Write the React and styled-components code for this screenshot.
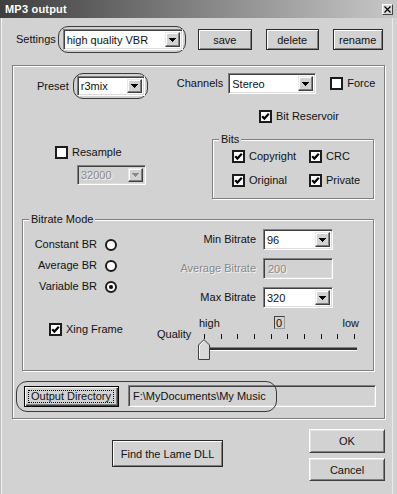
import React from 'react'
import styled, { createGlobalStyle } from 'styled-components'

const FACE = '#d2d2d2'

const GlobalStyle = createGlobalStyle`
  html, body {
    margin: 0;
    padding: 0;
    background: ${FACE};
  }
  body {
    font-family: "Liberation Sans", Arial, sans-serif;
    font-size: 11px;
    color: #111;
  }
`

const Window = styled.div`
  width: 397px;
  height: 494px;
  box-sizing: border-box;
  overflow: hidden;
  display: flex;
  flex-direction: column;
  background: ${FACE};
  box-shadow: inset 1px 0 #bdbdbd, inset 2px 0 #f2f2f2, inset -4px 0 ${FACE}, inset -5px 0 #ececec;
`

const TitleBar = styled.div`
  height: 18px;
  flex: none;
  display: flex;
  align-items: center;
  justify-content: space-between;
  padding: 0 4px 0 5px;
  background: linear-gradient(to right, #3e3e3e, #8a8a8a 55%, #c8c8c8);
`

const TitleText = styled.span`
  color: #fff;
  font-weight: bold;
  font-size: 11px;
  letter-spacing: 0.2px;
`

const CloseBox = styled.span`
  width: 11px;
  height: 11px;
  box-sizing: border-box;
  display: flex;
  align-items: center;
  justify-content: center;
  background: #dadada;
  border: 1px solid;
  border-color: #fff #404040 #404040 #fff;
`

const SettingsRow = styled.div`
  display: flex;
  align-items: center;
  margin-top: 8px;
  padding-left: 16px;
`

const Label = styled.span`
  white-space: nowrap;
  line-height: 13px;
  margin-left: ${p => p.$ml || 0}px;
  color: ${p => (p.$disabled ? '#888' : '#111')};
  text-shadow: ${p => (p.$disabled ? '1px 1px #f4f4f4' : 'none')};
`

const Highlight = styled.div`
  display: flex;
  border: 1px solid #3a3a3a;
  border-radius: 10px;
  padding: ${p => p.$pad};
  margin-left: ${p => p.$ml || 0}px;
`

const Combo = styled.div`
  box-sizing: border-box;
  width: ${p => p.$w}px;
  height: ${p => p.$h}px;
  display: flex;
  padding: 2px;
  background: ${p => (p.$disabled ? FACE : '#fff')};
  border: 1px solid;
  border-color: #808080 #fff #fff #808080;
  box-shadow: inset 1px 1px #404040, inset -1px -1px #dcdcdc;
  margin-left: ${p => p.$ml || 0}px;
`

const ComboValue = styled.span`
  flex: 1;
  display: flex;
  align-items: center;
  padding-left: 1px;
  white-space: nowrap;
  overflow: hidden;
  color: ${p => (p.$disabled ? '#8a8a8a' : '#111')};
  text-shadow: ${p => (p.$disabled ? '1px 1px #f4f4f4' : 'none')};
`

const DropButton = styled.span`
  width: 15px;
  box-sizing: border-box;
  display: flex;
  align-items: center;
  justify-content: center;
  background: ${FACE};
  border: 1px solid;
  border-color: #e8e8e8 #404040 #404040 #e8e8e8;
  box-shadow: inset -1px -1px #808080, inset 1px 1px #fff;
`

const Button = styled.button`
  box-sizing: border-box;
  width: ${p => p.$w}px;
  height: ${p => p.$h || 21}px;
  margin: 0 0 0 ${p => p.$ml || 0}px;
  padding: 0;
  font: 11px "Liberation Sans", Arial, sans-serif;
  color: #111;
  background: ${FACE};
  border: 1px solid;
  border-color: ${p => (p.$framed ? '#2a2a2a' : '#fff #404040 #404040 #fff')};
  box-shadow: ${p =>
    p.$framed
      ? 'inset 1px 1px #fff, inset -1px -1px #808080'
      : 'inset 1px 1px #e4e4e4, inset -1px -1px #808080'};
`

const FocusButton = styled(Button)`
  border: 1px solid #000;
  box-shadow: inset 1px 1px #fff, inset -1px -1px #404040, inset -2px -2px #808080;
  padding: 3px 4px 3px 3px;
`

const FocusRect = styled.span`
  box-sizing: border-box;
  width: 100%;
  height: 100%;
  display: flex;
  align-items: center;
  justify-content: center;
  border: 1px dotted #000;
`

const Panel = styled.div`
  box-sizing: border-box;
  width: 373px;
  height: 354px;
  margin: 12px 0 0 12px;
  display: flex;
  flex-direction: column;
  border: 1px solid #808080;
  box-shadow: inset 1px 1px #fff, 1px 1px #fff;
`

const Row = styled.div`
  display: flex;
  align-items: ${p => p.$align || 'center'};
  margin-top: ${p => p.$mt || 0}px;
  padding-left: ${p => p.$pl || 0}px;
`

const Group = styled.div`
  box-sizing: border-box;
  width: ${p => p.$w}px;
  height: ${p => p.$h}px;
  margin: ${p => p.$m || 0};
  display: flex;
  flex-direction: column;
  border: 1px solid #808080;
  box-shadow: inset 1px 1px #fff, 1px 1px #fff;
`

const GroupTitle = styled.span`
  align-self: flex-start;
  height: 13px;
  line-height: 13px;
  margin: -7px 0 -6px 6px;
  padding: 0 2px;
  background: ${FACE};
`

const CheckWrap = styled.span`
  display: inline-flex;
  align-items: center;
  gap: 4px;
  line-height: 13px;
  white-space: nowrap;
  margin: ${p => p.$m || 0};
`

const Box = styled.span`
  box-sizing: border-box;
  width: 13px;
  height: 13px;
  flex: none;
  display: flex;
  align-items: center;
  justify-content: center;
  background: #fff;
  border: 2px solid #1c1c1c;
`

const LeftColumn = styled.div`
  width: 199px;
  box-sizing: border-box;
  padding-left: 42px;
  display: flex;
  flex-direction: column;
  align-items: flex-start;
`

const BitsGrid = styled.div`
  display: grid;
  grid-template-columns: 77px auto;
  row-gap: 11px;
  padding: 10px 0 0 19px;
`

const RadioColumn = styled.div`
  width: 95px;
  padding-top: 14px;
  display: flex;
  flex-direction: column;
`

const RadioRow = styled.div`
  height: 21px;
  display: flex;
  align-items: center;
  justify-content: flex-end;
  gap: 8px;
  padding-right: 1px;
`

const RadioCircle = styled.span`
  box-sizing: border-box;
  width: 12px;
  height: 12px;
  border-radius: 50%;
  border: 2px solid #1c1c1c;
  background: #fff;
  display: flex;
  align-items: center;
  justify-content: center;
`

const RadioDot = styled.span`
  width: 4px;
  height: 4px;
  border-radius: 50%;
  background: #000;
`

const FieldsGrid = styled.div`
  display: grid;
  grid-template-columns: 100px 70px;
  grid-auto-rows: 21px;
  column-gap: 7px;
  row-gap: 8px;
  margin-left: 38px;
  padding-top: 9px;
  align-items: center;
  justify-items: end;
`

const Edit = styled.div`
  box-sizing: border-box;
  width: ${p => p.$w}px;
  height: ${p => p.$h}px;
  margin-left: ${p => p.$ml || 0}px;
  display: flex;
  align-items: center;
  padding-left: 4px;
  white-space: nowrap;
  background: ${FACE};
  border: 1px solid;
  border-color: #808080 #fff #fff #808080;
  box-shadow: inset 1px 1px #404040, inset -1px -1px #dcdcdc;
  color: ${p => (p.$disabled ? '#8a8a8a' : '#111')};
  text-shadow: ${p => (p.$disabled ? '1px 1px #f4f4f4' : 'none')};
`

const XingBlock = styled.div`
  width: 134px;
  box-sizing: border-box;
  padding: 7px 0 0 26px;
`

const QualityLabel = styled.span`
  width: 41px;
  margin-top: 12px;
  line-height: 13px;
`

const SliderBox = styled.div`
  width: 163px;
  display: flex;
  flex-direction: column;
`

const SliderLabels = styled.div`
  height: 13px;
  display: flex;
  justify-content: space-between;
  align-items: center;
  padding: 0 2px 0 1px;
  line-height: 12px;
`

const ValueBox = styled.span`
  box-sizing: border-box;
  width: 11px;
  height: 13px;
  display: flex;
  align-items: center;
  justify-content: center;
  border: 1px solid;
  border-color: #404040 #9a9a9a #9a9a9a #404040;
  margin-right: 4px;
`

const OutputRow = styled.div`
  position: relative;
  display: flex;
  align-items: center;
  margin-top: 14px;
  padding-left: 11px;
`

const OutputHighlight = styled.span`
  position: absolute;
  left: 3px;
  top: -4px;
  width: 261px;
  height: 31px;
  box-sizing: border-box;
  border: 1px solid #3a3a3a;
  border-radius: 11px;
  pointer-events: none;
`

const BottomRow = styled.div`
  display: flex;
  align-items: flex-start;
  padding-left: 112px;
`

const ButtonStack = styled.div`
  margin: 10px 12px 0 auto;
  display: flex;
  flex-direction: column;
  gap: 5px;
`

function Arrow({ disabled }) {
  const c = disabled ? '#8a8a8a' : '#000'
  return (
    <svg width="7" height="4" viewBox="0 0 7 4" shapeRendering="crispEdges">
      <path d="M0 0h7v1H0z M1 1h5v1H1z M2 2h3v1H2z M3 3h1v1H3z" fill={c} />
    </svg>
  )
}

function ComboBox({ value, width, height = 21, disabled, ml }) {
  return (
    <Combo $w={width} $h={height} $disabled={disabled} $ml={ml}>
      <ComboValue $disabled={disabled}>{value}</ComboValue>
      <DropButton>
        <Arrow disabled={disabled} />
      </DropButton>
    </Combo>
  )
}

function CheckBox({ checked, children, m }) {
  return (
    <CheckWrap $m={m}>
      <Box>
        {checked && (
          <svg width="9" height="9" viewBox="0 0 9 9">
            <path d="M1.2 4.2 L3.4 6.6 L7.8 1.8" fill="none" stroke="#000" strokeWidth="2.2" />
          </svg>
        )}
      </Box>
      {children && <span>{children}</span>}
    </CheckWrap>
  )
}

function Radio({ label, checked }) {
  return (
    <RadioRow>
      <Label>{label}</Label>
      <RadioCircle>{checked && <RadioDot />}</RadioCircle>
    </RadioRow>
  )
}

function QualitySlider() {
  const ticks = Array.from({ length: 10 }, (_, i) => 6.5 + Math.round(i * 16.67))
  return (
    <SliderBox>
      <SliderLabels>
        <span>high</span>
        <ValueBox>0</ValueBox>
        <span>low</span>
      </SliderLabels>
      <svg width="163" height="31" viewBox="0 0 163 31">
        {ticks.map(x => (
          <line key={x} x1={x} x2={x} y1={5} y2={10} stroke="#111" strokeWidth="1" />
        ))}
        <rect x="6" y="18" width="153" height="1" fill="#808080" />
        <rect x="6" y="19" width="153" height="2" fill="#303030" />
        <rect x="6" y="21" width="153" height="1" fill="#fff" />
        <polygon points="0.5,30.5 0.5,16 6,10.5 11.5,16 11.5,30.5" fill="#d8d8d8" stroke="#404040" />
        <polyline points="1.5,29.5 1.5,16.5 6,12" fill="none" stroke="#fff" />
      </svg>
    </SliderBox>
  )
}

export default function App() {
  return (
    <Window>
      <GlobalStyle />
      <TitleBar>
        <TitleText>MP3 output</TitleText>
        <CloseBox>
          <svg width="7" height="7" viewBox="0 0 7 7">
            <path d="M0.5 0.5 L6.5 6.5 M6.5 0.5 L0.5 6.5" stroke="#000" strokeWidth="1.3" />
          </svg>
        </CloseBox>
      </TitleBar>

      <SettingsRow>
        <Label>Settings</Label>
        <Highlight $pad="2px 2px 2px 4px" $ml={2}>
          <ComboBox value="high quality VBR" width={120} />
        </Highlight>
        <Button $framed $w={54} $ml={12}>save</Button>
        <Button $framed $w={53} $ml={14}>delete</Button>
        <Button $framed $w={50} $ml={14}>rename</Button>
      </SettingsRow>

      <Panel>
        <Row $mt={7} $pl={24} $align="flex-start">
          <Label style={{ marginTop: 7 }}>Preset</Label>
          <Highlight $pad="2px 2px 2px 3px" $ml={4}>
            <ComboBox value="r3mix" width={68} height={20} />
          </Highlight>
          <Row>
            <Label $ml={29}>Channels</Label>
            <ComboBox value="Stereo" width={88} ml={5} />
            <CheckBox m="0 0 0 14px">Force</CheckBox>
          </Row>
        </Row>

        <Row $mt={11} $pl={246}>
          <CheckBox checked>Bit Reservoir</CheckBox>
        </Row>

        <Row $mt={16} $align="flex-start">
          <LeftColumn>
            <CheckBox m="7px 0 0 0">Resample</CheckBox>
            <Combo $w={69} $h={20} $disabled $ml={22} style={{ marginTop: 6 }}>
              <ComboValue $disabled>32000</ComboValue>
              <DropButton>
                <Arrow disabled />
              </DropButton>
            </Combo>
          </LeftColumn>
          <Group $w={162} $h={60}>
            <GroupTitle>Bits</GroupTitle>
            <BitsGrid>
              <CheckBox checked>Copyright</CheckBox>
              <CheckBox checked>CRC</CheckBox>
              <CheckBox checked>Original</CheckBox>
              <CheckBox checked>Private</CheckBox>
            </BitsGrid>
          </Group>
        </Row>

        <Group $w={352} $h={152} $m="20px 0 0 9px">
          <GroupTitle>Bitrate Mode</GroupTitle>
          <Row $align="flex-start">
            <RadioColumn>
              <Radio label="Constant BR" />
              <Radio label="Average BR" />
              <Radio label="Variable BR" checked />
            </RadioColumn>
            <FieldsGrid>
              <Label>Min Bitrate</Label>
              <ComboBox value="96" width={70} />
              <Label $disabled>Average Bitrate</Label>
              <Edit $w={70} $h={21} $disabled>200</Edit>
              <Label>Max Bitrate</Label>
              <ComboBox value="320" width={70} />
            </FieldsGrid>
          </Row>
          <Row $mt={8} $align="flex-start">
            <XingBlock>
              <CheckBox checked>Xing Frame</CheckBox>
            </XingBlock>
            <QualityLabel>Quality</QualityLabel>
            <QualitySlider />
          </Row>
        </Group>

        <OutputRow>
          <FocusButton $w={95} $h={21}>
            <FocusRect>Output Directory</FocusRect>
          </FocusButton>
          <Edit $w={248} $h={22} $ml={9}>F:\MyDocuments\My Music</Edit>
          <OutputHighlight />
        </OutputRow>
      </Panel>

      <BottomRow>
        <Button $framed $w={111} $h={27} style={{ marginTop: 21 }}>Find the Lame DLL</Button>
        <ButtonStack>
          <Button $w={76} $h={24}>OK</Button>
          <Button $w={76} $h={23}>Cancel</Button>
        </ButtonStack>
      </BottomRow>
    </Window>
  )
}
